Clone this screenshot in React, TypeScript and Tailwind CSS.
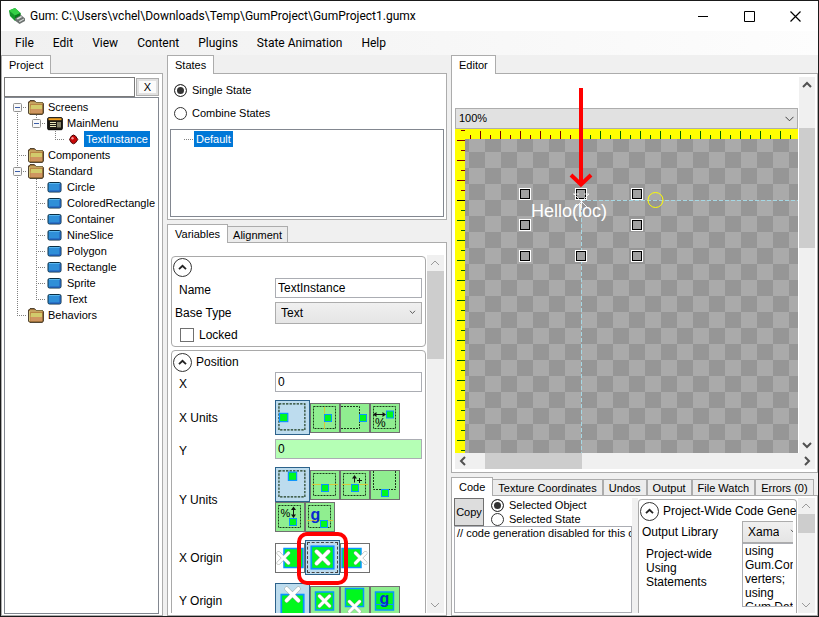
import { useState } from "react";
import type { ReactNode } from "react";
import clsx from "clsx";

/* ---------- shared pieces ---------- */

function TabStrip({ id, tabs }: { id: string; tabs: string[] }) {
  return (
    <div role="tablist" aria-label={id} className="flex h-[18px] shrink-0 items-end">
      {tabs.map((tab, i) => (
        <button
          key={tab}
          role="tab"
          aria-selected={i === 0}
          className={clsx(
            "shrink-0 whitespace-nowrap border border-b-0 border-[#acacac] text-[11px] leading-4",
            i === 0 ? "relative z-10 -mb-px h-[19px] bg-white px-[7px]" : "h-4 bg-[#ececec] px-[5px]",
            i === 1 && "-ml-px"
          )}
        >
          {tab}
        </button>
      ))}
    </div>
  );
}

const arrowPaths = {
  up: "M4 10l4-4 4 4",
  down: "M4 6l4 4 4-4",
  left: "M10 4l-4 4 4 4",
  right: "M6 4l4 4-4 4",
};

function Arrow({ dir, className }: { dir: keyof typeof arrowPaths; className?: string }) {
  return (
    <svg viewBox="0 0 16 16" className={clsx("size-4 shrink-0", className)} fill="none" stroke="currentColor" aria-hidden="true">
      <path d={arrowPaths[dir]} />
    </svg>
  );
}

function VScroll({ muted, children }: { muted?: boolean; children: ReactNode }) {
  const tone = muted ? "text-[#9a9a9a] stroke-1" : "text-[#505050] stroke-2";
  return (
    <div className={clsx("flex shrink-0 flex-col bg-[#f0f0f0]", muted ? "w-[17px]" : "w-4")}>
      <Arrow dir="up" className={tone} />
      <div className="min-h-0 flex-1">{children}</div>
      <Arrow dir="down" className={tone} />
    </div>
  );
}

function CollapseButton({ label }: { label: string }) {
  return (
    <button aria-label={label} className="flex size-[19px] shrink-0 items-center justify-center rounded-full border border-[#333] bg-white">
      <svg viewBox="0 0 9 9" className="size-[9px]" fill="none" stroke="#222" strokeWidth="1.8" aria-hidden="true">
        <path d="M1 6.2L4.500 2.800L8 6.200" />
      </svg>
    </button>
  );
}

function Radio({ name, label, checked, onChange, gap }: { name: string; label: string; checked: boolean; onChange: () => void; gap: string }) {
  return (
    <label className={clsx("flex items-center text-[11px] leading-[14px]", gap)}>
      <input
        type="radio"
        name={name}
        checked={checked}
        onChange={onChange}
        className="size-[13px] shrink-0 appearance-none rounded-full border border-[#333] bg-white checked:bg-[#333] checked:shadow-[inset_0_0_0_2px_white]"
      />
      {label}
    </label>
  );
}

/* ---------- title and menu ---------- */

function TitleBar() {
  return (
    <header className="flex h-[30px] shrink-0 items-center bg-white font-['Roboto','Open_Sans',sans-serif]">
      <svg viewBox="0 0 16 16" className="ml-2 size-4" aria-hidden="true">
        <path d="M0 2.500L6 0L11.500 5V10L6 13L1 8Z" fill="#14952a" />
        <path d="M0 2.500L6 0L11.500 5L6 7.500Z" fill="#35cf46" />
        <path d="M6 7.500L11.500 5V9L6 12.500Z" fill="#0a7a1c" />
        <path d="M6 10.500L12 7L16 10.500V13L10.500 16L6.500 13Z" fill="#6d7371" />
        <path d="M7.500 10.500L12 8L13.200 9L8.700 11.500ZM10 13L15 10.500V11.500L10.500 14.200Z" fill="#d8dcda" />
      </svg>
      <h1 className="ml-[5px] flex-1 truncate text-xs">Gum: C:\Users\vchel\Downloads\Temp\GumProject\GumProject1.gumx</h1>
      <button aria-label="Minimize" className="flex h-full w-[46px] items-center justify-center">
        <svg viewBox="0 0 11 11" className="size-[11px]" stroke="#000" aria-hidden="true"><path d="M0 5.500H10" /></svg>
      </button>
      <button aria-label="Maximize" className="flex h-full w-[46px] items-center justify-center">
        <svg viewBox="0 0 11 11" className="size-[11px]" stroke="#000" fill="none" aria-hidden="true"><path d="M.5.5H10.500V10.500H.5Z" /></svg>
      </button>
      <button aria-label="Close" className="flex h-full w-[46px] items-center justify-center">
        <svg viewBox="0 0 11 11" className="size-[11px]" stroke="#000" strokeWidth="1.200" aria-hidden="true"><path d="M.5.5L10.500 10.500M10.500.5L.5 10.500" /></svg>
      </button>
    </header>
  );
}

function MenuBar() {
  const items = ["File", "Edit", "View", "Content", "Plugins", "State Animation", "Help"];
  return (
    <nav className="flex h-6 shrink-0 items-center gap-[19px] bg-linear-to-r from-[#f0f0f0] to-[#fdfdfd] px-[14px] font-['Roboto','Open_Sans',sans-serif] text-xs">
      {items.map((item) => (
        <button key={item} className="whitespace-nowrap">{item}</button>
      ))}
    </nav>
  );
}

/* ---------- project tree ---------- */

type Guide = "line" | "tee" | "end" | "blank" | "openFirst" | "open" | "openEnd";
type Icon = "folder" | "screen" | "instance" | "standard";

function GuideCell({ kind }: { kind: Guide }) {
  const up = kind !== "blank" && kind !== "openFirst";
  const down = kind === "line" || kind === "tee" || kind === "open" || kind === "openFirst";
  const right = kind !== "line" && kind !== "blank";
  const box = kind.startsWith("open");
  return (
    <svg viewBox="0 0 19 16" className="h-4 w-[19px] shrink-0" aria-hidden="true">
      <g stroke="#808080" strokeDasharray="1 1" fill="none">
        {up && <path d="M9.500 0V8" />}
        {down && <path d="M9.500 8V16" />}
        {right && <path d="M9 8.500H19" />}
      </g>
      {box && (
        <>
          <rect x="5.500" y="4.500" width="8" height="8" rx="1" fill="#f8f8f8" stroke="#919191" />
          <path d="M7 8.500H12" stroke="#3b5da8" />
        </>
      )}
    </svg>
  );
}

function NodeIcon({ kind }: { kind: Icon }) {
  return (
    <svg viewBox="0 0 16 16" className="mx-px size-4 shrink-0" aria-hidden="true">
      {kind === "folder" && (
        <>
          <path d="M.7 14.300V3L2 1.700H6.500L8 3.500H14.500L15.300 4.500V14L14.500 15.300H1.700Z" fill="#b98545" stroke="#2e220f" />
          <path d="M1.500 4V14M2 4H14.500" stroke="#d3c27a" />
          <path d="M3 6H14V10H2.500Z" fill="#d2cb6c" />
          <path d="M2.500 10H14V14H2.500Z" fill="#cf9560" />
        </>
      )}
      {kind === "screen" && (
        <>
          <rect x=".7" y="2.700" width="14.600" height="12" rx="1" fill="#1c1a14" stroke="#000" />
          <path d="M1.500 4.200H14.500" stroke="#f0a020" strokeWidth="2" />
          <path d="M3 7.500H9M3 9.500H9M3 11.500H9" stroke="#e8e6b8" />
          <path d="M11 7V12.500M13 7V12.500" stroke="#e8e6b8" />
        </>
      )}
      {kind === "instance" && (
        <>
          <path d="M5.500 5L7.500 4L9.500 5L11.800 8.500L9.500 11.800L7.500 12.800L5.500 11.800L3.500 8.500Z" fill="#c80808" stroke="#4a0000" strokeLinejoin="round" />
          <circle cx="6.500" cy="7.300" r="1.200" fill="#ff9a9a" />
        </>
      )}
      {kind === "standard" && (
        <>
          <rect x="1" y="3.500" width="13" height="9.500" rx="1.500" fill="#2f8fd8" stroke="#0a2f45" />
          <path d="M2 4.500H12.500" stroke="#5ab6ee" />
          <path d="M2.500 12H13V5" stroke="#2456b8" fill="none" />
        </>
      )}
    </svg>
  );
}

const treeRows: { label: string; icon: Icon; guides: Guide[]; selected?: boolean }[] = [
  { label: "Screens", icon: "folder", guides: ["openFirst"] },
  { label: "MainMenu", icon: "screen", guides: ["line", "openEnd"] },
  { label: "TextInstance", icon: "instance", guides: ["line", "blank", "end"], selected: true },
  { label: "Components", icon: "folder", guides: ["tee"] },
  { label: "Standard", icon: "folder", guides: ["open"] },
  { label: "Circle", icon: "standard", guides: ["line", "tee"] },
  { label: "ColoredRectangle", icon: "standard", guides: ["line", "tee"] },
  { label: "Container", icon: "standard", guides: ["line", "tee"] },
  { label: "NineSlice", icon: "standard", guides: ["line", "tee"] },
  { label: "Polygon", icon: "standard", guides: ["line", "tee"] },
  { label: "Rectangle", icon: "standard", guides: ["line", "tee"] },
  { label: "Sprite", icon: "standard", guides: ["line", "tee"] },
  { label: "Text", icon: "standard", guides: ["line", "end"] },
  { label: "Behaviors", icon: "folder", guides: ["end"] },
];

function ProjectPanel() {
  return (
    <section className="flex w-[162px] shrink-0 flex-col">
      <TabStrip id="Project" tabs={["Project"]} />
      <div className="flex min-h-0 flex-1 flex-col border border-[#acacac] bg-white pt-[3px] pr-[3px] pb-px pl-0.5">
        <div className="flex items-center gap-px">
          <input aria-label="Search" className="h-5 min-w-0 flex-1 border border-[#7a7a7a] bg-white px-1 text-[11px]" />
          <button aria-label="Clear search" className="h-[18px] w-[23px] border border-[#adadad] bg-[#fbfbfb] text-[11px] leading-4 outline-2 -outline-offset-3 outline-[#e1e1e1]">X</button>
        </div>
        <ul role="tree" aria-label="Project tree" className="min-h-0 flex-1 overflow-hidden border border-[#828790] py-px pl-[3px] text-[11px] leading-4">
          {treeRows.map((row) => (
            <li key={row.label} role="treeitem" aria-selected={!!row.selected} className="flex h-4 items-center">
              {row.guides.map((g, i) => <GuideCell key={i} kind={g} />)}
              <NodeIcon kind={row.icon} />
              <span className={clsx("ml-px whitespace-nowrap px-0.5", row.selected && "bg-[#0078d7] text-white")}>{row.label}</span>
            </li>
          ))}
        </ul>
      </div>
    </section>
  );
}

/* ---------- states ---------- */

function StatesPanel() {
  const [mode, setMode] = useState("single");
  return (
    <section className="flex shrink-0 flex-col">
      <TabStrip id="States" tabs={["States"]} />
      <div className="flex h-[147px] flex-col border border-[#acacac] bg-white px-0.5 pb-0.5">
        <div className="flex flex-1 flex-col gap-[9px] px-1 pt-[9px]">
          <Radio name="stateMode" label="Single State" gap="gap-[5px]" checked={mode === "single"} onChange={() => setMode("single")} />
          <Radio name="stateMode" label="Combine States" gap="gap-[5px]" checked={mode === "combine"} onChange={() => setMode("combine")} />
        </div>
        <ul role="listbox" aria-label="State list" className="h-[88px] border border-[#828790] px-[13px] py-px text-[11px] leading-4">
          <li role="option" aria-selected="true" className="flex items-center gap-px">
            <svg viewBox="0 0 9 16" className="h-4 w-[9px]" aria-hidden="true"><path d="M0 8.500H9" stroke="#808080" strokeDasharray="1 1" /></svg>
            <span className="bg-[#0078d7] px-0.5 text-white">Default</span>
          </li>
        </ul>
      </div>
    </section>
  );
}

/* ---------- variables ---------- */

function Tile({ label, selected, plain, focus, children }: { label: string; selected?: boolean; plain?: boolean; focus?: boolean; children: ReactNode }) {
  return (
    <button
      aria-label={label}
      aria-pressed={!!selected}
      className={clsx(
        "shrink-0 border",
        selected ? "size-[35px] border-[#2c628b] bg-[#bddcee]" : "size-[30px] border-[#707070]",
        !selected && (plain ? "bg-white" : "bg-[#90ee90]"),
        focus && "outline-1 -outline-offset-3 outline-dashed outline-[#444]"
      )}
    >
      <svg viewBox="0 0 28 28" className="size-full" aria-hidden="true">{children}</svg>
    </button>
  );
}

function Frame({ d = "M2.500 2.500H24.500V24.500H2.500Z" }: { d?: string }) {
  return <path d={d} fill="none" stroke="#1c3a1c" strokeWidth="1" strokeDasharray="2 1" />;
}

function Box({ x, y, size = 7 }: { x: number; y: number; size?: number }) {
  return <rect x={x} y={y} width={size} height={size} fill="#00f81e" stroke="#0a94ff" strokeWidth={size > 10 ? 1.5 : 1} />;
}

function Cross({ x, y }: { x: number; y: number }) {
  const d = `M${x - 5} ${y - 5}L${x + 5} ${y + 5}M${x + 5} ${y - 5}L${x - 5} ${y + 5}`;
  return (
    <>
      <path d={d} stroke="#a0a8a0" strokeWidth="3.800" strokeLinecap="round" />
      <path d={d} stroke="#fff" strokeWidth="3" strokeLinecap="round" />
    </>
  );
}

function Guideline({ d }: { d: string }) {
  return <path d={d} stroke="#d8c838" strokeWidth="1" />;
}

function Glyph({ x, y, size, blue, children }: { x: number; y: number; size: number; blue?: boolean; children: string }) {
  return (
    <text x={x} y={y} fontSize={size} fill={blue ? "#0a2ad0" : "#000"} fontWeight={blue ? 700 : 400}>
      {children}
    </text>
  );
}

const fieldLabel = "w-[103px] shrink-0 pl-[7px]";

function FieldRow({ id, label, value, tint }: { id: string; label: string; value: string; tint?: boolean }) {
  return (
    <div className="flex h-5 items-center">
      <label htmlFor={id} className={clsx(fieldLabel, "pt-1")}>{label}</label>
      <input
        id={id}
        defaultValue={value}
        className={clsx("h-5 min-w-0 flex-1 border border-[#abadb3] px-0.5", tint ? "bg-[#b5ffb5]" : "bg-white")}
      />
    </div>
  );
}

function TileRow({ label, children }: { label: string; children: ReactNode }) {
  return (
    <div role="group" aria-label={label} className="flex items-center">
      <span className={fieldLabel}>{label}</span>
      <div className="flex flex-1 flex-wrap items-center">{children}</div>
    </div>
  );
}

function VariablesPanel() {
  return (
    <section className="flex min-h-0 flex-1 flex-col">
      <TabStrip id="Variables" tabs={["Variables", "Alignment"]} />
      <div className="flex min-h-0 flex-1 gap-px border border-[#acacac] bg-white pt-3 pr-0.5 pb-0.5 pl-[3px]">
        <div className="min-h-0 min-w-0 flex-1 overflow-hidden pt-px text-xs leading-[14px]">
          <div className="mb-[3px] h-[91px] rounded border border-[#a9a9a9] pt-px pr-[3px]">
            <div className="flex h-5 pl-px">
              <CollapseButton label="Collapse general" />
            </div>
            <FieldRow id="name" label="Name" value="TextInstance" />
            <div className="mt-1 flex h-[22px] items-center">
              <label htmlFor="baseType" className="w-[103px] shrink-0 pl-[3px]">Base Type</label>
              <div className="relative h-full flex-1">
                <select id="baseType" className="block h-full w-full appearance-none border border-[#acacac] bg-linear-to-b from-[#f0f0f0] to-[#e5e5e5] px-[5px]">
                  <option>Text</option>
                </select>
                <svg viewBox="0 0 7 5" className="pointer-events-none absolute top-2 right-1.5 h-[5px] w-[7px]" fill="none" stroke="#606060" aria-hidden="true"><path d="M1 .8L3.500 3.500L6 .8" /></svg>
              </div>
            </div>
            <label className="mt-1 flex items-center gap-[5px] pl-2 text-xs leading-[14px]">
              <input type="checkbox" className="size-[14px] appearance-none border border-[#707070] bg-white" />
              Locked
            </label>
          </div>

          <div className="rounded-t border border-[#a9a9a9] pt-px pr-[3px] pb-2">
            <div className="flex h-5 items-center gap-1 pl-px">
              <CollapseButton label="Collapse position" />
              <span>Position</span>
            </div>
            <FieldRow id="x" label="X" value="0" />
            <div className="mt-2">
              <TileRow label="X Units">
                <Tile label="Pixels from left" selected><Frame /><Box x={3} y={10.5} /></Tile>
                <Tile label="Pixels from center"><Frame /><Guideline d="M13.500 3V25" /><Box x={13.5} y={10.5} /></Tile>
                <Tile label="Pixels from right"><Frame d="M0 2.500H18.500V24.500H0" /><Box x={18.5} y={10.5} /></Tile>
                <Tile label="Percentage width">
                  <Frame />
                  <Box x={15.5} y={7} />
                  <path d="M3 10.500H14" stroke="#111" />
                  <path d="M2 10.500L5.500 8V13ZM15 10.500L11.500 8V13Z" fill="#111" />
                  <Glyph x={4} y={23} size={12}>%</Glyph>
                </Tile>
              </TileRow>
            </div>
            <div className="mt-1"><FieldRow id="y" label="Y" value="0" tint /></div>
            <div className="mt-2">
              <TileRow label="Y Units">
                <Tile label="Pixels from top" selected><Frame /><Box x={10.5} y={3.5} /></Tile>
                <Tile label="Pixels from middle"><Frame /><Guideline d="M1 13.500H27" /><Box x={10.5} y={13.5} /></Tile>
                <Tile label="Pixels from middle inverted">
                  <Frame /><Guideline d="M1 13.500H27" /><Box x={10.5} y={13.5} />
                  <path d="M13.500 11.500V5M16 9.500H21M18.500 7V12" stroke="#111" />
                  <path d="M13.500 4L11 7.500H16Z" fill="#111" />
                </Tile>
                <Tile label="Pixels from bottom"><Frame d="M2.500 0V18.500H24.500V0" /><Box x={10.5} y={18.5} /></Tile>
                <Tile label="Percentage height">
                  <Frame />
                  <Box x={13.5} y={15.5} />
                  <path d="M17.500 5V14" stroke="#111" />
                  <path d="M17.500 3.500L15 7H20ZM17.500 15L15 11.500H20Z" fill="#111" />
                  <Glyph x={4.5} y={14} size={11}>%</Glyph>
                </Tile>
                <Tile label="Pixels from baseline">
                  <Frame /><Guideline d="M1 17.500H27" /><Box x={14.5} y={17.5} />
                  <Glyph x={4.5} y={17} size={16} blue>g</Glyph>
                </Tile>
              </TileRow>
            </div>
            <div className="mt-2">
              <TileRow label="X Origin">
                <Tile label="Left origin" plain><Box x={8} y={4.5} size={19} /><Cross x={7.5} y={14} /></Tile>
                <div className="relative z-10 flex">
                  <Tile label="Center origin" selected focus><Box x={4.5} y={4.5} size={19} /><Cross x={14} y={14} /></Tile>
                  <div className="pointer-events-none absolute -inset-x-2 -top-2 -bottom-2.5 rounded-[10px] border-4 border-[#ff0000]" />
                </div>
                <Tile label="Right origin" plain><Box x={1} y={4.5} size={19} /><Cross x={19.5} y={14} /></Tile>
              </TileRow>
            </div>
            <div className="mt-2">
              <TileRow label="Y Origin">
                <Tile label="Top origin" selected><Box x={4.5} y={9} size={19} /><Cross x={14} y={9} /></Tile>
                <Tile label="Middle origin"><Box x={4.5} y={5} size={18} /><Cross x={13.5} y={14} /></Tile>
                <Tile label="Bottom origin"><Box x={4.5} y={1.5} size={18} /><Cross x={13.5} y={19.5} /></Tile>
                <Tile label="Baseline origin"><Box x={4.5} y={5} size={18} /><path d="M5 17.500H22" stroke="#0a94ff" /><Glyph x={8.5} y={17} size={16} blue>g</Glyph></Tile>
              </TileRow>
            </div>
          </div>
        </div>
        <VScroll muted>
          <div className="h-[27%] bg-[#cdcdcd]" />
        </VScroll>
      </div>
    </section>
  );
}

/* ---------- editor ---------- */

function EditorCanvas() {
  const ticks = Array.from({ length: 200 }, (_, i) => i);
  const handles = [[64, 59], [120, 59], [176, 59], [64, 90], [176, 90], [64, 121], [120, 121], [176, 121]];
  const tone = (pos: number, origin: number) => (pos === origin ? "#000" : pos < origin ? "#7a0000" : "#006400");
  return (
    <svg className="block size-full" role="img" aria-label="Editor canvas" shapeRendering="crispEdges">
      <defs>
        <pattern id="checker" x="14" y="7" width="32" height="32" patternUnits="userSpaceOnUse">
          <rect width="32" height="32" fill="#969696" />
          <rect width="16" height="16" fill="#aaaaaa" />
          <rect x="16" y="16" width="16" height="16" fill="#aaaaaa" />
        </pattern>
      </defs>
      <rect width="100%" height="100%" fill="#ffff00" />
      {ticks.map((i) => {
        const x = 15 + i * 10;
        return <rect key={x} x={x} y={i % 2 ? 2 : 6} width="1" height={i % 2 ? 8 : 4} fill={tone(x, 125)} />;
      })}
      {ticks.map((i) => {
        const y = 1 + i * 10;
        return <rect key={y} x={i % 2 ? 2 : 6} y={y} width={i % 2 ? 8 : 4} height="1" fill={tone(y, 71)} />;
      })}
      <rect x="10" y="10" width="100%" height="100%" fill="url(#checker)" />
      <path d="M126 71.500H4000M126.500 71V4000" stroke="#a5d8e4" strokeDasharray="4 2" />
      {handles.map(([x, y]) => (
        <g key={`${x}-${y}`}>
          <rect x={x + 0.5} y={y + 0.5} width="11" height="11" fill="none" stroke="#fff" />
          <rect x={x + 1.5} y={y + 1.5} width="9" height="9" fill="#a0a0a0" stroke="#000" />
        </g>
      ))}
      <g shapeRendering="auto">
        <path d="M118 65H124M129 65H134M119 65L133 79M134 65L120 79M126.500 71V79" stroke="#fff" strokeWidth="0.800" />
        <circle cx="200.500" cy="71" r="7.500" fill="none" stroke="#ffff00" />
        <text x="76" y="88" fontSize="18" fill="#fff">Hello(loc)</text>
      </g>
    </svg>
  );
}

function EditorPanel() {
  return (
    <section className="flex min-h-0 flex-1 flex-col">
      <TabStrip id="Editor" tabs={["Editor"]} />
      <div className="flex min-h-0 flex-1 flex-col border border-[#acacac] bg-white pt-[3px] pr-0.5 pb-[3px] pl-[3px]">
        <div className="flex min-h-0 flex-1 gap-px">
          <div className="relative flex min-w-0 flex-1 flex-col pt-[31px]">
            <div className="relative h-[21px] shrink-0">
              <select aria-label="Zoom" className="block h-full w-full appearance-none border border-[#adadad] bg-[#e1e1e1] px-[3px] text-[11px]">
                <option>100%</option>
              </select>
              <svg viewBox="0 0 9 6" className="pointer-events-none absolute top-2 right-1 h-1.5 w-[9px]" fill="none" stroke="#404040" aria-hidden="true"><path d="M.5 .8L4.500 4.800L8.500 .8" /></svg>
            </div>
            <div className="min-h-0 flex-1">
              <EditorCanvas />
            </div>
            <svg viewBox="0 0 24 100" className="pointer-events-none absolute top-[11px] left-[114px] h-[100px] w-6" fill="none" stroke="#ff0000" strokeWidth="4" aria-hidden="true">
              <path d="M12 0V96M2 87L12 96.500L22 87" />
            </svg>
          </div>
          <VScroll>
            <div className="h-[35px]" />
            <div className="h-[35%] bg-[#cdcdcd]" />
          </VScroll>
        </div>
        <div className="flex h-4 shrink-0 bg-[#f0f0f0] text-[#505050]">
          <Arrow dir="left" className="stroke-2" />
          <div className="flex-1 pl-3.5">
            <div className="h-full w-[31%] bg-[#cdcdcd]" />
          </div>
          <Arrow dir="right" className="stroke-2" />
        </div>
      </div>
    </section>
  );
}

/* ---------- code ---------- */

function CodePanel() {
  const [target, setTarget] = useState("object");
  return (
    <section className="flex h-[139px] shrink-0 flex-col">
      <TabStrip id="Code tools" tabs={["Code", "Texture Coordinates", "Undos", "Output", "File Watch", "Errors (0)"]} />
      <div className="flex min-h-0 flex-1 border border-[#acacac] bg-white p-0.5">
        <div className="flex min-w-0 flex-1 flex-col">
          <div className="flex">
            <button className="h-7 w-[30px] border border-[#707070] bg-[#dddddd] text-[11px]">Copy</button>
            <div className="flex flex-col pl-[7px]">
              <Radio name="codeTarget" label="Selected Object" gap="gap-[5px]" checked={target === "object"} onChange={() => setTarget("object")} />
              <Radio name="codeTarget" label="Selected State" gap="gap-[5px]" checked={target === "state"} onChange={() => setTarget("state")} />
            </div>
          </div>
          <textarea
            aria-label="Generated code"
            readOnly
            wrap="off"
            defaultValue="// code generation disabled for this object"
            className="min-h-0 w-full flex-1 resize-none overflow-hidden whitespace-pre border border-[#abadb3] bg-white px-0.5 text-[11px] leading-3"
          />
        </div>
        <div className="w-1.5 shrink-0 bg-[#f0f0f0]" />
        <div className="w-[159px] min-w-0 shrink-0 overflow-hidden pt-px text-xs leading-[14px]">
          <div className="h-full rounded-t border border-b-0 border-[#a9a9a9] pt-px">
            <div className="flex h-5 items-center gap-1 pl-px">
              <CollapseButton label="Collapse code generation" />
              <span className="whitespace-nowrap">Project-Wide Code Gene</span>
            </div>
            <div className="mr-[3px] flex h-[22px] items-center overflow-hidden">
              <label htmlFor="library" className="w-[103px] shrink-0 pl-[3px]">Output Library</label>
              <div className="relative h-full w-[66px] shrink-0">
                <select id="library" className="block h-full w-full appearance-none border border-[#acacac] bg-linear-to-b from-[#f0f0f0] to-[#e5e5e5] pr-7 pl-[5px]">
                  <option>XamarinForms</option>
                </select>
                <svg viewBox="0 0 7 5" className="pointer-events-none absolute top-2 left-12 h-[5px] w-[7px]" fill="none" stroke="#606060" aria-hidden="true"><path d="M1 .8L3.500 3.500L6 .8" /></svg>
              </div>
            </div>
            <div className="mr-[3px] flex overflow-hidden">
              <label htmlFor="usings" className="w-[103px] shrink-0 pt-1 pr-2 pl-[7px]">Project-wide Using Statements</label>
              <textarea
                id="usings"
                readOnly
                wrap="off"
                defaultValue={"using\nGum.Con\nverters;\nusing\nGum.Data"}
                className="h-16 w-[66px] shrink-0 resize-none overflow-hidden whitespace-pre border border-[#abadb3] bg-white px-0.5 leading-[14px]"
              />
            </div>
          </div>
        </div>
        <div className="w-px shrink-0" />
        <VScroll muted>
          <div className="h-[23%] bg-[#cdcdcd]" />
        </VScroll>
      </div>
    </section>
  );
}

export default function App() {
  return (
    <div className="flex h-screen flex-col overflow-hidden border border-[#1a1a1a] bg-[#f0f0f0] font-['Liberation_Sans',Arial,sans-serif] text-black">
      <TitleBar />
      <MenuBar />
      <main className="flex min-h-0 flex-1 gap-1">
        <ProjectPanel />
        <div className="flex w-[280px] shrink-0 flex-col gap-1">
          <StatesPanel />
          <VariablesPanel />
        </div>
        <div className="flex min-w-0 flex-1 flex-col gap-1">
          <EditorPanel />
          <CodePanel />
        </div>
      </main>
    </div>
  );
}
